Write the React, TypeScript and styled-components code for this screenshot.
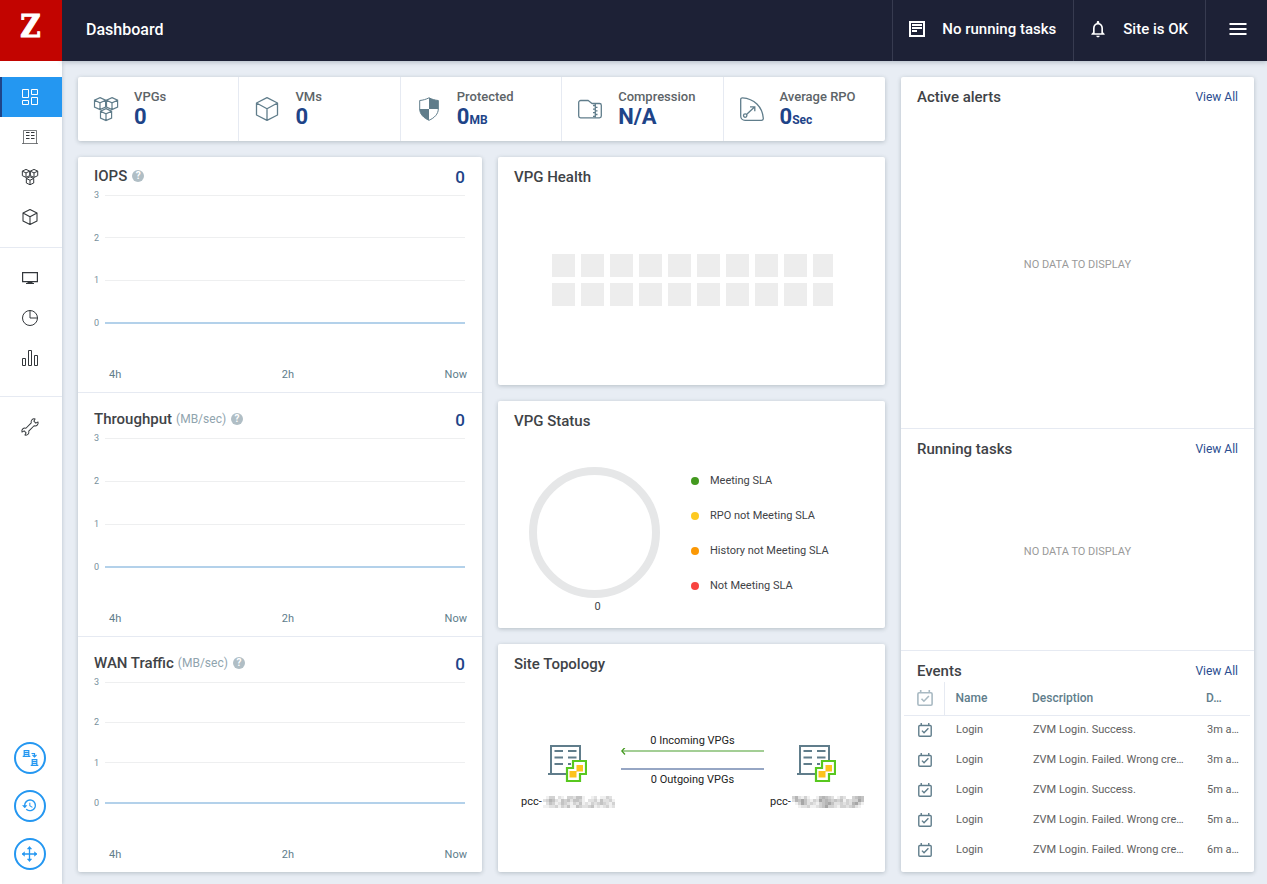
import React from "react";
import styled, { createGlobalStyle } from "styled-components";

const c = {
  navy: "#1d2136",
  red: "#c20400",
  page: "#e8edf4",
  blue: "#2497f1",
  deep: "#1e4488",
  text: "#3f4347",
  slate: "#607d8b",
  muted: "#b0bec5",
  rule: "#e6eaf2",
};

const GlobalStyle = createGlobalStyle`
  *, *::before, *::after { box-sizing: border-box; }
  body { margin: 0; background: ${c.page}; color: ${c.text}; font-family: Roboto, "Liberation Sans", sans-serif; font-size: 11px; line-height: 14px; }
  button { font: inherit; color: inherit; background: none; border: 0; padding: 0; cursor: pointer; }
  h1, h2, p, ul, dl, dd { margin: 0; padding: 0; font-weight: inherit; }
  ul { list-style: none; }
  svg { display: block; flex: none; }
`;

const Page = styled.div`
  display: grid;
  grid-template: 61px 1fr / 62px minmax(0, 1fr);
  min-height: 100vh;
`;

const Logo = styled.a`
  display: flex;
  justify-content: center;
  padding-right: 1px;
  background: ${c.red};
  color: #fff;
  font: bold 31px/52px "DejaVu Serif Condensed", "DejaVu Serif", serif;
  -webkit-text-stroke: 1px #fff;
  text-decoration: none;
  z-index: 2;
`;

const Header = styled.header`
  display: flex;
  background: ${c.navy};
  color: #fff;
  font-size: 15px;
  font-weight: 500;
  line-height: 20px;
  box-shadow: 0 1px 5px rgba(40, 60, 80, 0.3);
  z-index: 1;
`;

const PageTitle = styled.h1`
  flex: 1;
  padding: 20px 24px;
  font-size: 16px;
  font-weight: 500;
`;

const HeaderButton = styled.button`
  display: flex;
  align-items: center;
  gap: 17px;
  padding: 0 17px 3px 16px;
  border-left: 1px solid #373b50;
`;

const MenuButton = styled(HeaderButton)`
  padding: 0 20px 3px 23px;
`;

const Sidebar = styled.aside`
  display: flex;
  flex-direction: column;
  justify-content: space-between;
  padding: 16px 0 14px;
  background: #fff;
  box-shadow: 1px 0 3px rgba(40, 60, 80, 0.16);
`;

const NavGroup = styled.ul`
  padding: 10px 0 18px;
  border-bottom: 1px solid ${c.rule};
  &:first-child { padding: 0 0 10px; }
  &:last-child { border: 0; }
`;

const NavButton = styled.button<{ $active?: boolean }>`
  display: flex;
  align-items: center;
  justify-content: center;
  width: 100%;
  height: 40px;
  padding-right: 2px;
  color: ${(p) => (p.$active ? "#fff" : "#33373b")};
  background: ${(p) => (p.$active ? c.blue : "none")};
  box-shadow: ${(p) => (p.$active ? `inset 2px 0 ${c.deep}` : "none")};
`;

const Actions = styled.div`
  display: grid;
  gap: 16px;
  justify-content: center;
  padding-right: 2px;
`;

const RoundButton = styled.button`
  display: flex;
  align-items: center;
  justify-content: center;
  width: 32px;
  height: 32px;
  border: 2px solid ${c.blue};
  border-radius: 50%;
  color: ${c.blue};
`;

const Main = styled.main`
  display: grid;
  grid-template-columns: minmax(0, 16fr) minmax(0, 7fr);
  gap: 16px;
  padding: 16px 13px 12px 16px;
`;

const Overview = styled.div`
  display: grid;
  grid-template-rows: 64px 1fr;
  gap: 16px;
`;

const Columns = styled.div`
  display: grid;
  grid-template-columns: minmax(0, 404fr) minmax(0, 387fr);
  gap: 16px;
`;

const Card = styled.section`
  background: #fff;
  border-radius: 2px;
  box-shadow: 0 1px 4px rgba(50, 70, 80, 0.28);
`;

const Stats = styled(Card)`
  display: grid;
  grid-template-columns: repeat(5, 1fr);
`;

const Stat = styled.div`
  display: flex;
  align-items: center;
  gap: 16px;
  padding: 0 0 0 16px;
  color: ${c.slate};
  &:not(:last-child) { border-right: 1px solid ${c.rule}; }
`;

const StatLabel = styled.p`
  color: #5d6468;
  font-size: 13px;
  font-weight: 500;
  line-height: 16px;
`;

const StatValue = styled.p`
  color: ${c.deep};
  font-size: 22px;
  font-weight: 700;
  line-height: 24px;
  small { font-size: 12px; line-height: 12px; }
`;

const Charts = styled(Card)`
  display: grid;
  grid-template-rows: 235fr 244fr 236fr;
`;

const ChartPanel = styled.section`
  display: flex;
  flex-direction: column;
  padding: 9px 15px 10px 16px;
  & + & { padding-top: 16px; border-top: 1px solid ${c.rule}; }
`;

const ChartHead = styled.div`
  display: flex;
  align-items: center;
  gap: 4px;
  height: 20px;
`;

const Title = styled.h2`
  font-size: 15px;
  font-weight: 500;
  line-height: 20px;
`;

const Unit = styled.span`
  color: #90a4ae;
  font-size: 12px;
`;

const Help = styled.button`
  width: 12px;
  height: 12px;
  margin-left: 1px;
  border-radius: 50%;
  background: ${c.muted};
  color: #fff;
  font-size: 10px;
  font-weight: 700;
  line-height: 12px;
`;

const Reading = styled.span`
  margin-left: auto;
  padding: 2px 2px 0 0;
  color: ${c.deep};
  font-size: 17px;
  font-weight: 500;
`;

const Plot = styled.ul`
  flex: 1;
  display: flex;
  flex-direction: column;
  justify-content: space-between;
  margin: 4px 2px 40px 0;
`;

const Tick = styled.li`
  display: flex;
  align-items: center;
  gap: 6px;
  height: 10px;
  color: #78909c;
  font-size: 9px;
  line-height: 10px;
  &::after { content: ""; flex: 1; height: 1px; background: #eeeff0; }
  &:last-child::after { height: 2px; background: #b3d1ea; }
`;

const TimeAxis = styled.div`
  display: grid;
  grid-template-columns: 1fr auto 1fr;
  margin-left: 15px;
  color: ${c.slate};
  span:last-child { text-align: right; }
`;

const Stack = styled.div`
  display: grid;
  grid-template-rows: repeat(3, 1fr);
  gap: 16px;
`;

const Widget = styled(Card)`
  display: flex;
  flex-direction: column;
  padding: 10px 16px;
`;

const Health = styled.div`
  flex: 1;
  align-content: center;
  padding: 0 0 1px 2px;
`;

const HealthGrid = styled.div`
  display: grid;
  grid-template-columns: repeat(10, 23px);
  gap: 6px;
  width: 281px;
  margin: 0 auto;
  overflow: hidden;
`;

const HealthCell = styled.span`
  height: 23px;
  background: #ededed;
`;

const Status = styled.div`
  display: grid;
  grid-template-columns: 131px 1fr;
  column-gap: 31px;
  align-items: center;
  padding: 36px 0 0 15px;
`;

const Caption = styled.p`
  padding: 2px 0 0 6px;
  text-align: center;
`;

const Legend = styled.ul`
  display: grid;
  gap: 21px;
  padding-top: 2px;
`;

const LegendItem = styled.li<{ $color: string }>`
  display: flex;
  align-items: center;
  gap: 11px;
  &::before { content: ""; width: 8px; height: 8px; border-radius: 50%; background: ${(p) => p.$color}; }
`;

const Topology = styled.div`
  display: flex;
  justify-content: center;
  gap: 6px;
  padding: 60px 0 0 2px;
  color: #222;
`;

const Site = styled.div`
  display: flex;
  flex-direction: column;
  align-items: center;
  gap: 13px;
  width: 94px;
  padding-top: 10px;
`;

const SiteName = styled.div`
  display: flex;
  align-items: center;
`;

const Links = styled.div`
  width: 143px;
  text-align: center;
`;

const Feed = styled(Card)`
  display: grid;
  grid-template-rows: 351fr 222fr 222fr;
`;

const FeedPanel = styled.section`
  display: flex;
  flex-direction: column;
  & + & { border-top: 1px solid ${c.rule}; }
`;

const FeedHead = styled.div`
  display: flex;
  align-items: center;
  justify-content: space-between;
  padding: 10px 16px 0;
`;

const ViewAll = styled.a`
  color: #2a4d8f;
  font-size: 12px;
  text-decoration: none;
`;

const Empty = styled.p`
  flex: 1;
  display: flex;
  align-items: center;
  justify-content: center;
  padding-bottom: 6px;
  color: #9a9a9a;
`;

const Events = styled.table`
  width: calc(100% - 7px);
  margin: 1px 4px 0 3px;
  border-collapse: collapse;
  table-layout: fixed;
  white-space: nowrap;
`;

const Th = styled.th<{ $width?: number }>`
  width: ${(p) => (p.$width ? `${p.$width}px` : "auto")};
  height: 33px;
  padding: 0 0 0 10px;
  border-bottom: 1px solid ${c.rule};
  color: ${c.slate};
  font-size: 12px;
  font-weight: 500;
  text-align: left;
`;

const IconTh = styled(Th)`
  padding-left: 13px;
  border-right: 1px solid ${c.rule};
  color: #a9bac3;
`;

const Td = styled.td`
  height: 30px;
  padding: 0 0 0 11px;
  color: #616161;
`;

const IconTd = styled(Td)`
  padding-left: 14px;
  color: ${c.slate};
`;

type IconProps = { w?: number; h?: number; vw?: number; vh?: number; sw?: number; children: React.ReactNode };
const Icon = ({ w = 16, h = w, vw = w, vh = h, sw = 1, children }: IconProps) => (
  <svg width={w} height={h} viewBox={`0 0 ${vw} ${vh}`} fill="none" stroke="currentColor" strokeWidth={sw} overflow="visible" aria-hidden="true">
    {children}
  </svg>
);

const DashboardIcon = () => (
  <Icon><path d="M.5.5h6v8h-6zM9.5.5h6v5h-6zM.5 11.5h6v4h-6zM9.5 8.5h6v7h-6z" /></Icon>
);
const BuildingIcon = () => (
  <Icon>
    <path d="M1.5 14.500V1.500h13v13M0 14.500h16" opacity=".65" />
    <path d="M4 3.500h3.500M9 3.500h3.500M4 6.500h3.500M9 6.500h3.500M4 9.500h3.500M9 9.500h3.500" />
  </Icon>
);
const cube = "M6 .6 11.600 3.200V10L6 12.600.5 10V3.200zM.5 3.200 6 5.900l5.600-2.700M6 5.900v6.700";
const CubesIcon = ({ size }: { size: number }) => (
  <Icon w={size} vw={24} vh={24} sw={size > 20 ? 1.2 : 1.5}>
    <path d={cube} />
    <path d={cube} transform="translate(12 0)" />
    <path d={cube} transform="translate(6 11)" />
  </Icon>
);
const CubeIcon = ({ size }: { size: number }) => (
  <Icon w={size} vw={24} vh={24} sw={size > 20 ? 1.3 : 1.6}>
    <path strokeLinejoin="round" d="M12 .7 22.500 6v12L12 23.300 1.500 18V6zM1.500 6 12 11.700 22.500 6M12 11.700v11.600" />
  </Icon>
);
const MonitorIcon = () => (
  <Icon><path d="M.6 2.600h14.800v9H.6z" strokeWidth="1.200" /><path d="M5.500 12.500h5M4 13.500h8" /></Icon>
);
const PieIcon = () => (
  <Icon><circle cx="8" cy="8" r="7.500" /><path d="M8 .5V8h7.500" /></Icon>
);
const BarsIcon = () => (
  <Icon><path d="M.5 8.500h3v7h-3zM6.500.5h3v15h-3zM12.500 5.500h3v10h-3z" /></Icon>
);
const WrenchIcon = () => (
  <Icon>
    <path transform="rotate(-45 8 8) translate(.8 0) scale(.9 1)" strokeLinejoin="round" d="M-2.300 5.900.4 6.600v2.800l-2.700.7A3.600 3.600 0 0 0 3.800 10h8.400A3.600 3.600 0 0 0 18.300 10.100l-2.700-.7V6.600l2.700-.7A3.600 3.600 0 0 0 12.200 6H3.800A3.600 3.600 0 0 0-2.300 5.900z" />
  </Icon>
);
const TransferIcon = () => (
  <Icon sw={1.2}>
    <path d="M2.200 6.400V.6h4.600v5.800M.7 6.400h7.600M2.300 2.600h4.400M2.300 4.500h4.400M10.200 15.400V9.600h4.600v5.800M8.700 15.400h7.600M10.300 11.500h4.400M10.300 13.400h4.400M9.500 3.500h3v3M10.500 5l2 2 2-2" />
  </Icon>
);
const HistoryIcon = () => (
  <Icon w={16} vw={24} vh={24}>
    <path fill="currentColor" stroke="none" transform="translate(-1 -1)" d="M13 3a9 9 0 0 0-9 9H1l3.890 3.890.7.140L9 12H6a7 7 0 1 1 2.060 4.940l-1.420 1.420A9 9 0 1 0 13 3zm-1 5v5l4.280 2.540.72-1.210-3.500-2.080V8z" />
  </Icon>
);
const MoveIcon = () => (
  <Icon sw={1.3}>
    <path d="M7.500.8v14.400M.3 8h14.400" />
    <path fill="currentColor" strokeWidth=".5" d="m5.300 3 2.200-2.500L9.700 3zM5.300 13l2.200 2.500L9.700 13zM2.500 5.800 0 8l2.500 2.200zM12.500 5.800 15 8l-2.500 2.200z" />
  </Icon>
);
const TasksIcon = () => (
  <Icon sw={2}><path d="M1 1h14v14H1z" /><path d="M3 4h10M3 7h10M3 10h5" /></Icon>
);
const BellIcon = () => (
  <svg width="16" height="20" viewBox="2.400 0 19.200 24" fill="currentColor" aria-hidden="true">
    <path d="M12 22c1.100 0 2-.9 2-2h-4c0 1.100.9 2 2 2zm6-6v-5c0-3.070-1.630-5.640-4.500-6.320V4c0-.83-.67-1.500-1.500-1.500s-1.500.67-1.500 1.500v.68C7.640 5.360 6 7.920 6 11v5l-2 2v1h16v-1l-2-2zm-2 1H8v-6c0-2.480 1.510-4.500 4-4.500s4 2.020 4 4.500v6z" />
  </svg>
);
const MenuIcon = () => (
  <Icon w={18} h={12} sw={2}><path d="M.5 1h17M.5 6h17M.5 11h17" /></Icon>
);
const ShieldIcon = () => (
  <Icon w={24}>
    <path d="M12 .8c3 1.600 6 2.400 9.300 2.700v8.500c0 5-4 9-9.300 11.300C6.700 21 2.700 17 2.700 12V3.500C6 3.200 9 2.400 12 .8z" />
    <path fill="currentColor" stroke="none" d="M12 .8c3 1.600 6 2.400 9.300 2.700V12H12zM12 12v11.300C6.700 21 2.700 17 2.700 12z" />
  </Icon>
);
const FolderIcon = () => (
  <Icon w={24} sw={1.3}>
    <path strokeLinejoin="round" d="M.7 19V5.500a2 2 0 0 1 2-2h7.500L14 6.500h7.500a1.800 1.800 0 0 1 1.800 1.800V19a1.800 1.800 0 0 1-1.800 1.800h-19A1.800 1.800 0 0 1 .7 19z" />
    <path d="M15 8.500h2.500M17 10.300h2.500M15 12.100h2.500M17 13.900h2.500M15 15.700h2.500M17 17.500h2.500M15 19.300h2.500M17.300 7v13.500" />
  </Icon>
);
const GaugeIcon = () => (
  <Icon w={24} sw={1.3}>
    <path strokeLinejoin="round" d="M.7 19V2.500A1.700 1.700 0 0 1 2.500.8C14 1.500 22.500 10 23.300 21.300a1.800 1.800 0 0 1-1.800 2H5A4.300 4.300 0 0 1 .7 19z" />
    <circle cx="5.200" cy="18.600" r="1.700" />
    <path d="m6.500 17.400 8.300-7.600M10 9.800h4.800v4.500" />
  </Icon>
);
const CalendarIcon = ({ size }: { size: number }) => (
  <Icon w={size} vw={16} vh={16} sw={1.6}>
    <rect x=".9" y="2.800" width="14.200" height="12.400" rx="1.200" />
    <path d="M3.700 0v3M12.300 0v3M4.500 8.700l2.400 2.500 5-5.200" />
  </Icon>
);
const SiteIcon = () => (
  <svg width="39" height="38" viewBox="0 0 39 38" fill="none" aria-hidden="true">
    <path d="M3 29V2h29v14M0 30h18" stroke={c.slate} strokeWidth="2" />
    <path d="M6.500 7H15M20 7h8.500M6.500 13.500H15M20 13.500h8.500M6.500 20H15M20 20h3" stroke={c.slate} strokeWidth="2" />
    <path d="M25 17h13v13h-6v7H19V24h6z" fill="#fff" stroke="#58c81f" strokeWidth="2.200" />
    <path d="M28.500 21h6.500v6.500h-6.500zM21.500 27h7v6.500h-7z" fill="#fdc21e" />
  </svg>
);
const Donut = () => (
  <svg width="131" height="131" viewBox="0 0 131 131" role="img" aria-label="No VPGs">
    <circle cx="65.500" cy="65.500" r="61.500" fill="none" stroke="#e6e7e8" strokeWidth="8" />
  </svg>
);
const Arrows = () => (
  <svg width="143" height="25" viewBox="0 0 143 25" fill="none" aria-hidden="true">
    <path d="M1 3h142" stroke="#a3ce95" strokeWidth="2" />
    <path d="M4 -.5.8 3 4 6.500" stroke="#43991f" strokeWidth="1.300" />
    <path d="M0 21h143" stroke="#96a6c4" strokeWidth="2" />
  </svg>
);

/* Redacted host names: each digit is the darkness of one block. */
const masks = [
  ["013302103324410012011320", "235421434244310223142231", "024312432132412132343213", "112231324114322341212312"],
  ["352131001454320132003454", "254642132645434341323364", "013642321345642232325631", "001223112346332133234210"],
];
const Redaction = ({ rows }: { rows: string[] }) => (
  <svg width="73" height="12" viewBox="0 0 72 12" shapeRendering="crispEdges" aria-hidden="true">
    {rows.flatMap((row, y) =>
      [...row].map((d, x) => (
        <rect key={`${x}-${y}`} x={x * 3} y={y * 3} width="3" height="3" fill={`rgba(90,90,90,${Number(d) * 0.09})`} />
      )),
    )}
  </svg>
);

const nav = [
  [
    { label: "Dashboard", icon: <DashboardIcon /> },
    { label: "Sites", icon: <BuildingIcon /> },
    { label: "VPGs", icon: <CubesIcon size={16} /> },
    { label: "VMs", icon: <CubeIcon size={16} /> },
  ],
  [
    { label: "Monitoring", icon: <MonitorIcon /> },
    { label: "Reports", icon: <PieIcon /> },
    { label: "Analytics", icon: <BarsIcon /> },
  ],
  [{ label: "Setup", icon: <WrenchIcon /> }],
];

const actions = [
  { label: "Failover", icon: <TransferIcon /> },
  { label: "Restore", icon: <HistoryIcon /> },
  { label: "Move", icon: <MoveIcon /> },
];

const stats = [
  { label: "VPGs", value: "0", icon: <CubesIcon size={24} /> },
  { label: "VMs", value: "0", icon: <CubeIcon size={24} /> },
  { label: "Protected", value: "0", unit: "MB", icon: <ShieldIcon /> },
  { label: "Compression", value: "N/A", icon: <FolderIcon /> },
  { label: "Average RPO", value: "0", unit: "Sec", icon: <GaugeIcon /> },
];

const charts = [
  { title: "IOPS" },
  { title: "Throughput", unit: "(MB/sec)" },
  { title: "WAN Traffic", unit: "(MB/sec)" },
];

const legend = [
  { label: "Meeting SLA", color: "#43991f" },
  { label: "RPO not Meeting SLA", color: "#fdc921" },
  { label: "History not Meeting SLA", color: "#fb9804" },
  { label: "Not Meeting SLA", color: "#f8433f" },
];

const failed = "ZVM Login. Failed. Wrong cre…";
const events = [
  ["Login", "ZVM Login. Success.", "3m a…"],
  ["Login", failed, "3m a…"],
  ["Login", "ZVM Login. Success.", "5m a…"],
  ["Login", failed, "5m a…"],
  ["Login", failed, "6m a…"],
];

const FeedHeader = ({ title }: { title: string }) => (
  <FeedHead>
    <Title>{title}</Title>
    <ViewAll href="#">View All</ViewAll>
  </FeedHead>
);

export default function App() {
  return (
    <Page>
      <GlobalStyle />
      <Logo href="#">Z</Logo>
      <Header>
        <PageTitle>Dashboard</PageTitle>
        <HeaderButton><TasksIcon />No running tasks</HeaderButton>
        <HeaderButton><BellIcon />Site is OK</HeaderButton>
        <MenuButton aria-label="Menu"><MenuIcon /></MenuButton>
      </Header>

      <Sidebar>
        <nav>
          {nav.map((group, g) => (
            <NavGroup key={g}>
              {group.map((item, i) => (
                <li key={item.label}>
                  <NavButton aria-label={item.label} $active={g === 0 && i === 0}>{item.icon}</NavButton>
                </li>
              ))}
            </NavGroup>
          ))}
        </nav>
        <Actions>
          {actions.map((a) => <RoundButton key={a.label} aria-label={a.label}>{a.icon}</RoundButton>)}
        </Actions>
      </Sidebar>

      <Main>
        <Overview>
          <Stats>
            {stats.map((s) => (
              <Stat key={s.label}>
                {s.icon}
                <div>
                  <StatLabel>{s.label}</StatLabel>
                  <StatValue>{s.value}{s.unit && <small>{s.unit}</small>}</StatValue>
                </div>
              </Stat>
            ))}
          </Stats>

          <Columns>
            <Charts>
              {charts.map((chart) => (
                <ChartPanel key={chart.title}>
                  <ChartHead>
                    <Title>{chart.title}</Title>
                    {chart.unit && <Unit>{chart.unit}</Unit>}
                    <Help aria-label={`About ${chart.title}`}>?</Help>
                    <Reading>0</Reading>
                  </ChartHead>
                  <Plot>
                    {[3, 2, 1, 0].map((n) => <Tick key={n}>{n}</Tick>)}
                  </Plot>
                  <TimeAxis><span>4h</span><span>2h</span><span>Now</span></TimeAxis>
                </ChartPanel>
              ))}
            </Charts>

            <Stack>
              <Widget>
                <Title>VPG Health</Title>
                <Health>
                  <HealthGrid>
                    {Array.from({ length: 20 }, (_, i) => <HealthCell key={i} />)}
                  </HealthGrid>
                </Health>
              </Widget>
              <Widget>
                <Title>VPG Status</Title>
                <Status>
                  <Donut />
                  <Legend>
                    {legend.map((l) => <LegendItem key={l.label} $color={l.color}>{l.label}</LegendItem>)}
                  </Legend>
                  <Caption>0</Caption>
                </Status>
              </Widget>
              <Widget>
                <Title>Site Topology</Title>
                <Topology>
                  <Site><SiteIcon /><SiteName>pcc-<Redaction rows={masks[0]} /></SiteName></Site>
                  <Links>
                    <p>0 Incoming VPGs</p>
                    <Arrows />
                    <p>0 Outgoing VPGs</p>
                  </Links>
                  <Site><SiteIcon /><SiteName>pcc-<Redaction rows={masks[1]} /></SiteName></Site>
                </Topology>
              </Widget>
            </Stack>
          </Columns>
        </Overview>

        <Feed>
          <FeedPanel>
            <FeedHeader title="Active alerts" />
            <Empty>NO DATA TO DISPLAY</Empty>
          </FeedPanel>
          <FeedPanel>
            <FeedHeader title="Running tasks" />
            <Empty>NO DATA TO DISPLAY</Empty>
          </FeedPanel>
          <FeedPanel>
            <FeedHeader title="Events" />
            <Events>
              <thead>
                <tr>
                  <IconTh $width={41} aria-label="Type"><CalendarIcon size={16} /></IconTh>
                  <Th $width={77}>Name</Th>
                  <Th>Description</Th>
                  <Th $width={54}>D…</Th>
                </tr>
              </thead>
              <tbody>
                {events.map(([name, description, date], i) => (
                  <tr key={i}>
                    <IconTd><CalendarIcon size={14} /></IconTd>
                    <Td>{name}</Td>
                    <Td>{description}</Td>
                    <Td>{date}</Td>
                  </tr>
                ))}
              </tbody>
            </Events>
          </FeedPanel>
        </Feed>
      </Main>
    </Page>
  );
}
